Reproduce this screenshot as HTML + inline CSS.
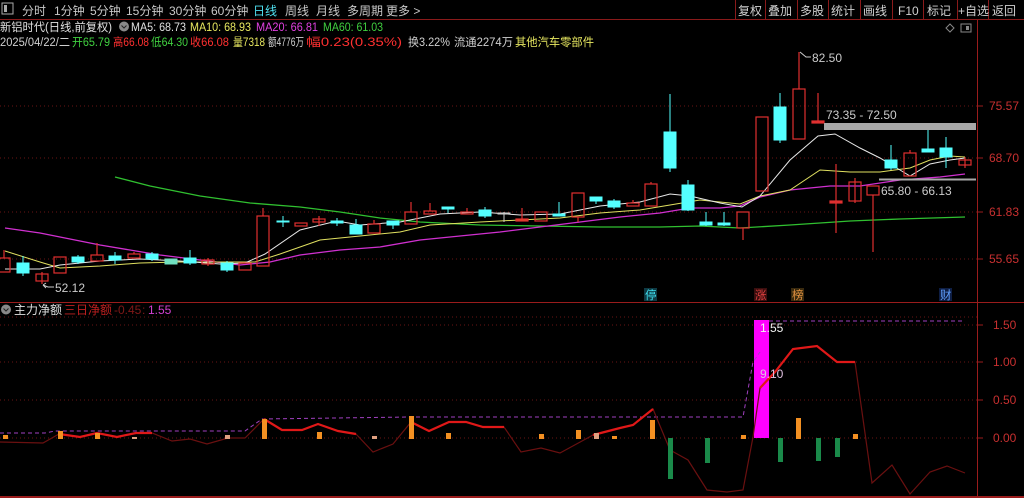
<!DOCTYPE html>
<html><head><meta charset="utf-8"><style>
html,body{margin:0;padding:0;background:#000;width:1024px;height:498px;overflow:hidden}
svg{display:block}
text{font-family:"Liberation Sans","Noto Sans CJK SC",sans-serif;font-size:12px}
.s{font-size:11.5px}
</style></head><body>
<svg width="1024" height="498" viewBox="0 0 1024 498" xmlns="http://www.w3.org/2000/svg">
<rect width="1024" height="498" fill="#000"/>
<!-- toolbar -->
<rect x="2" y="3" width="11" height="11" fill="none" stroke="#aaa"/><rect x="4" y="5" width="3" height="7" fill="#aaa"/>
<g fill="#c8c8c8">
<text x="22" y="15">分时</text><text x="54" y="15">1分钟</text><text x="90" y="15">5分钟</text><text x="126" y="15">15分钟</text><text x="169" y="15">30分钟</text><text x="211" y="15">60分钟</text>
<text x="253" y="15" fill="#4fe0f0">日线</text><text x="285" y="15">周线</text><text x="316" y="15">月线</text><text x="347" y="15">多周期</text><text x="386" y="15">更多 &gt;</text>
</g>
<g stroke="#8a1a1a" fill="none">
<line x1="0" y1="19.5" x2="1024" y2="19.5"/>
<line x1="735.5" y1="0" x2="735.5" y2="19"/><line x1="765.5" y1="0" x2="765.5" y2="19"/><line x1="797.5" y1="0" x2="797.5" y2="19"/><line x1="828.5" y1="0" x2="828.5" y2="19"/><line x1="860.5" y1="0" x2="860.5" y2="19"/><line x1="892.5" y1="0" x2="892.5" y2="19"/><line x1="923.5" y1="0" x2="923.5" y2="19"/><line x1="957.5" y1="0" x2="957.5" y2="19"/><line x1="988.5" y1="0" x2="988.5" y2="19"/>
</g>
<g fill="#d0d0d0">
<text x="738" y="15">复权</text><text x="768" y="15">叠加</text><text x="800" y="15">多股</text><text x="831" y="15">统计</text><text x="863" y="15">画线</text><text x="898" y="15">F10</text><text x="927" y="15">标记</text><text x="958" y="15">+自选</text><text x="992" y="15">返回</text>
</g>
<!-- info lines -->
<text class="s" x="0" y="31" fill="#e0e0e0" textLength="112" lengthAdjust="spacingAndGlyphs">新铝时代(日线,前复权)</text>
<text class="s" x="131" y="31" fill="#e0e0e0" textLength="55" lengthAdjust="spacingAndGlyphs">MA5: 68.73</text>
<text class="s" x="190" y="31" fill="#e8e860" textLength="61" lengthAdjust="spacingAndGlyphs">MA10: 68.93</text>
<text class="s" x="256" y="31" fill="#e040e0" textLength="62" lengthAdjust="spacingAndGlyphs">MA20: 66.81</text>
<text class="s" x="323" y="31" fill="#40d040" textLength="60" lengthAdjust="spacingAndGlyphs">MA60: 61.03</text>
<text class="s" x="0" y="46" fill="#d0d0d0" textLength="70" lengthAdjust="spacingAndGlyphs">2025/04/22/二</text>
<text class="s" x="72" y="46" fill="#40d040" textLength="38" lengthAdjust="spacingAndGlyphs">开65.79</text>
<text class="s" x="113" y="46" fill="#ff3030" textLength="36" lengthAdjust="spacingAndGlyphs">高66.08</text>
<text class="s" x="151" y="46" fill="#40d040" textLength="37" lengthAdjust="spacingAndGlyphs">低64.30</text>
<text class="s" x="190" y="46" fill="#ff3030" textLength="39" lengthAdjust="spacingAndGlyphs">收66.08</text>
<text class="s" x="233" y="46" fill="#e8e860" textLength="32" lengthAdjust="spacingAndGlyphs">量7318</text>
<text class="s" x="268" y="46" fill="#d0d0d0" textLength="36" lengthAdjust="spacingAndGlyphs">额4776万</text>
<text class="s" x="306" y="46" fill="#ff3030" textLength="96" lengthAdjust="spacingAndGlyphs">幅0.23(0.35%)</text>
<text class="s" x="408" y="46" fill="#d0d0d0" textLength="42" lengthAdjust="spacingAndGlyphs">换3.22%</text>
<text class="s" x="454" y="46" fill="#d0d0d0" textLength="59" lengthAdjust="spacingAndGlyphs">流通2274万</text>
<text class="s" x="515" y="46" fill="#e8e860" textLength="79" lengthAdjust="spacingAndGlyphs">其他汽车零部件</text>
<circle cx="124" cy="26.5" r="5" fill="#888"/><path d="M121.5 25.5 L124 28 L126.5 25.5" stroke="#222" fill="none"/>
<!-- top-right small icons -->
<path d="M950 24 L954 28 L950 32 L946 28 Z" fill="none" stroke="#888"/>
<rect x="961" y="24" width="10" height="8" fill="none" stroke="#888"/><rect x="966" y="26" width="3" height="4" fill="#888"/>
<!-- axis -->
<line x1="977.5" y1="20" x2="977.5" y2="498" stroke="#9a1c1c"/>
<line x1="0" y1="302.5" x2="1024" y2="302.5" stroke="#9a1c1c"/>
<line x1="0" y1="497" x2="1024" y2="497" stroke="#9a1c1c" stroke-width="2"/>
<g stroke="#6a1414" stroke-dasharray="1,3">
<line x1="0" y1="106" x2="977" y2="106"/><line x1="0" y1="158" x2="977" y2="158"/><line x1="0" y1="212" x2="977" y2="212"/><line x1="0" y1="259" x2="977" y2="259"/>
<line x1="0" y1="317" x2="977" y2="317"/>
<line x1="0" y1="325" x2="977" y2="325"/><line x1="0" y1="362" x2="977" y2="362"/><line x1="0" y1="400" x2="977" y2="400"/><line x1="0" y1="438" x2="977" y2="438"/>
</g>
<g stroke="#9a1c1c"><line x1="977" y1="106" x2="983" y2="106"/><line x1="977" y1="158" x2="983" y2="158"/><line x1="977" y1="212" x2="983" y2="212"/><line x1="977" y1="259" x2="983" y2="259"/>
<line x1="977" y1="325" x2="983" y2="325"/><line x1="977" y1="362" x2="983" y2="362"/><line x1="977" y1="400" x2="983" y2="400"/><line x1="977" y1="438" x2="983" y2="438"/></g>
<g fill="#c83030">
<text x="989" y="110">75.57</text><text x="989" y="162">68.70</text><text x="989" y="216">61.83</text><text x="989" y="263">55.65</text>
<text x="993" y="329">1.50</text><text x="993" y="366">1.00</text><text x="993" y="404">0.50</text><text x="993" y="442">0.00</text>
</g>
<!-- MA lines -->
<polyline fill="none" stroke="#30c030" stroke-width="1.3" points="115,177 150,186 200,196 250,203 300,207 340,212 380,218 420,222 480,225 540,226 600,227 660,227 700,226 740,228 790,225 850,221 900,219 965,217"/>
<polyline fill="none" stroke="#d030d0" stroke-width="1.3" points="5,228 40,233 100,245 160,255 200,260 240,265 270,262 300,255 340,250 380,247 420,240 460,236 500,232 540,227 580,222 620,217 660,213 690,208 720,208 740,206 760,197 790,190 830,186 860,186 900,180 940,177 965,174"/>
<polyline fill="none" stroke="#e0e060" stroke-width="1" points="5,251 40,262 60,268 100,266 140,263 180,262 220,262 255,262 280,254 320,240 360,236 400,232 430,225 480,222 520,220 560,218 600,213 640,210 670,205 700,200 740,204 760,196 790,190 820,170 850,172 880,172 910,168 930,160 950,156 965,157"/>
<polyline fill="none" stroke="#e8e8e8" stroke-width="1" points="5,269 40,269 60,265 100,261 140,259 180,261 220,264 245,263 265,254 300,230 337,221 360,225 400,222 440,214 480,212 520,215 560,214 600,206 640,202 670,194 690,196 720,203 742,207 760,196 790,160 818,136 835,134 860,148 880,158 900,170 910,176 930,164 950,160 965,158"/>
<!-- candles -->
<g stroke="#e03030" fill="none" stroke-width="1.2">
<line x1="4" y1="250" x2="4" y2="258"/><rect x="-2" y="258" width="12" height="14"/>
<line x1="42" y1="272" x2="42" y2="284"/><rect x="36" y="274" width="12" height="7"/>
<rect x="54" y="257" width="12" height="16"/>
<line x1="97" y1="243" x2="97" y2="255"/><rect x="91" y="255" width="12" height="6"/>
<line x1="134" y1="252" x2="134" y2="254"/><rect x="128" y="254" width="12" height="4"/>
<line x1="208" y1="258" x2="208" y2="266"/><rect x="202" y="260" width="12" height="4"/>
<rect x="239" y="263" width="12" height="7"/>
<line x1="263" y1="208" x2="263" y2="216"/><rect x="257" y="216" width="12" height="50"/>
<rect x="295" y="223" width="12" height="3"/>
<line x1="319" y1="216" x2="319" y2="226"/><rect x="313" y="219" width="12" height="3"/>
<line x1="374" y1="220" x2="374" y2="224"/><rect x="368" y="224" width="12" height="9"/>
<line x1="411" y1="202" x2="411" y2="212"/><rect x="405" y="212" width="12" height="12"/>
<line x1="430" y1="203" x2="430" y2="211"/><rect x="424" y="211" width="12" height="3"/>
<line x1="467" y1="208" x2="467" y2="212"/><rect x="461" y="212" width="12" height="2"/>
<line x1="522" y1="208" x2="522" y2="219"/><rect x="516" y="219" width="12" height="2" fill="#e05030"/>
<rect x="535" y="212" width="12" height="9"/>
<line x1="578" y1="217" x2="578" y2="222"/><rect x="572" y="193" width="12" height="24"/>
<line x1="633" y1="200" x2="633" y2="203"/><rect x="627" y="203" width="12" height="3"/>
<line x1="651" y1="182" x2="651" y2="184"/><rect x="645" y="184" width="12" height="22"/>
<line x1="743" y1="228" x2="743" y2="240"/><rect x="737" y="212" width="12" height="16"/>
<rect x="756" y="117" width="12" height="74"/>
<line x1="799" y1="52" x2="799" y2="89"/><rect x="793" y="89" width="12" height="50"/>
<line x1="818" y1="93" x2="818" y2="121"/><rect x="812" y="121" width="12" height="2" fill="#e03030"/>
<line x1="836" y1="164" x2="836" y2="233"/><rect x="830" y="201" width="12" height="2" fill="#e03030"/>
<line x1="855" y1="178" x2="855" y2="203"/><rect x="849" y="182" width="12" height="19"/>
<line x1="873" y1="195" x2="873" y2="252"/><rect x="867" y="186" width="12" height="9"/>
<line x1="910" y1="150" x2="910" y2="153"/><rect x="904" y="153" width="12" height="23"/>
<line x1="965" y1="157" x2="965" y2="168"/><rect x="959" y="160" width="12" height="5"/>
</g>
<g stroke="#54ffff" fill="#54ffff" stroke-width="1">
<line x1="23" y1="256" x2="23" y2="276"/><rect x="17" y="263" width="12" height="10"/>
<line x1="78" y1="255" x2="78" y2="264"/><rect x="72" y="257" width="12" height="5"/>
<line x1="115" y1="252" x2="115" y2="264"/><rect x="109" y="256" width="12" height="4"/>
<line x1="152" y1="252" x2="152" y2="261"/><rect x="146" y="254" width="12" height="5"/>
<rect x="165" y="259" width="12" height="5" fill="#70e0c0" stroke="#70e0c0"/>
<line x1="190" y1="250" x2="190" y2="265"/><rect x="184" y="258" width="12" height="5"/>
<line x1="227" y1="261" x2="227" y2="272"/><rect x="221" y="263" width="12" height="7"/>
<line x1="283" y1="216" x2="283" y2="227"/><rect x="277" y="221" width="12" height="1"/>
<line x1="337" y1="218" x2="337" y2="226"/><rect x="331" y="221" width="12" height="2"/>
<line x1="356" y1="219" x2="356" y2="234"/><rect x="350" y="225" width="12" height="9"/>
<line x1="393" y1="221" x2="393" y2="229"/><rect x="387" y="221" width="12" height="4"/>
<line x1="448" y1="207" x2="448" y2="213"/><rect x="442" y="207" width="12" height="2"/>
<line x1="485" y1="207" x2="485" y2="218"/><rect x="479" y="210" width="12" height="6"/>
<line x1="504" y1="212" x2="504" y2="222" stroke="#ccc"/><rect x="498" y="213" width="12" height="1" stroke="#ccc"/>
<line x1="559" y1="202" x2="559" y2="216"/><rect x="553" y="214" width="12" height="2"/>
<line x1="596" y1="197" x2="596" y2="204"/><rect x="590" y="197" width="12" height="4"/>
<line x1="614" y1="199" x2="614" y2="209"/><rect x="608" y="201" width="12" height="6"/>
<line x1="670" y1="94" x2="670" y2="172"/><rect x="664" y="132" width="12" height="36"/>
<line x1="688" y1="180" x2="688" y2="211"/><rect x="682" y="185" width="12" height="25"/>
<line x1="706" y1="212" x2="706" y2="226"/><rect x="700" y="222" width="12" height="3"/>
<line x1="724" y1="212" x2="724" y2="226"/><rect x="718" y="223" width="12" height="2"/>
<line x1="780" y1="93" x2="780" y2="143"/><rect x="774" y="107" width="12" height="33"/>
<line x1="891" y1="145" x2="891" y2="170"/><rect x="885" y="160" width="12" height="8"/>
<line x1="928" y1="129" x2="928" y2="152"/><rect x="922" y="149" width="12" height="3"/>
<line x1="946" y1="137" x2="946" y2="168"/><rect x="940" y="148" width="12" height="9"/>
</g>
<!-- annotations -->
<path d="M800 52 L806 57 L811 57" stroke="#ccc" fill="none"/><text x="812" y="62" fill="#ccc">82.50</text>
<path d="M43 285 L48 287 L54 287 M43 285 L46 283 M43 285 L46 288" stroke="#ccc" fill="none"/><text x="55" y="292" fill="#ccc">52.12</text>
<rect x="824" y="123" width="152" height="7" fill="#a8a8a8"/><text x="826" y="119" fill="#ccc">73.35 - 72.50</text>
<line x1="879" y1="179.5" x2="976" y2="179.5" stroke="#a8a8a8" stroke-width="2"/><text x="881" y="195" fill="#ccc">65.80 - 66.13</text>
<rect x="644" y="288" width="13" height="13" fill="#0e3a44"/><text class="s" x="645" y="299" fill="#40e0f0">停</text>
<rect x="754" y="288" width="13" height="13" fill="#3a0e0e"/><text class="s" x="755" y="299" fill="#e04040">涨</text>
<rect x="791" y="288" width="13" height="13" fill="#3a2a0e"/><text class="s" x="792" y="299" fill="#e09040">榜</text>
<rect x="939" y="288" width="13" height="13" fill="#0e1e44"/><text class="s" x="940" y="299" fill="#60a0ff">财</text>
<!-- lower header -->
<circle cx="6" cy="309.5" r="5" fill="#888"/><path d="M3.5 308.5 L6 311 L8.5 308.5" stroke="#222" fill="none"/>
<text x="14" y="314" fill="#e0e0e0">主力净额</text>
<text x="64" y="314" fill="#c02020">三日净额</text>
<text x="114" y="314" fill="#801818">-0.45</text>
<text x="142" y="314" fill="#801818">:</text>
<text x="148" y="314" fill="#d040d0">1.55</text>
<!-- lower indicator -->
<rect x="754" y="320" width="15" height="118" fill="#ff00ff"/>
<polyline fill="none" stroke="#a040c0" stroke-dasharray="4,3" points="0,433 45,433 55,431 245,431 262,419 410,417 743,417 753,362 760,352"/>
<polyline fill="none" stroke="#a040c0" stroke-dasharray="4,3" points="769,321 963,321"/>
<polyline fill="none" stroke="#6a1010" stroke-width="1.2" points="0,442 43,443 59,434 80,437 97,433 117,437 136,433 152,433 172,441 190,439 207,444 228,438 245,438 264,419 282,430 302,430 318,424 338,431 356,434 373,452 393,444 411,422 429,431 449,422 466,422 483,427 504,427 521,452 541,448 560,453 593,435 620,428 633,425 653,409 670,450 688,460 707,490 727,492 743,490 753,437 760,388 775,372 793,349 817,346 837,362 855,362 872,483 892,465 910,494 930,472 947,466 965,473"/>
<g fill="none" stroke="#e01818" stroke-width="2.2">
<polyline points="59,434 80,437 97,433 117,437 136,433 152,433"/>
<polyline points="264,419 282,430 302,430 318,424 338,431 356,434"/>
<polyline points="411,422 429,431 449,422 466,422 483,427 504,427"/>
<polyline points="593,435 620,428 633,425 653,409"/>
<polyline points="760,388 775,372 793,349 817,346 837,362 855,362"/>
</g>
<g fill="#f39022">
<rect x="3" y="435" width="5" height="4"/><rect x="58" y="431" width="5" height="8"/><rect x="95" y="433" width="5" height="6"/>
<rect x="132" y="437" width="5" height="2" fill="#e0a080"/><rect x="225" y="435" width="5" height="4" fill="#e0a080"/>
<rect x="262" y="419" width="5" height="20"/><rect x="317" y="432" width="5" height="7"/><rect x="372" y="436" width="5" height="3" fill="#e0a080"/>
<rect x="409" y="416" width="5" height="23"/><rect x="446" y="433" width="5" height="6"/><rect x="539" y="434" width="5" height="5"/>
<rect x="576" y="430" width="5" height="9"/><rect x="594" y="433" width="5" height="6" fill="#e0a080"/><rect x="612" y="436" width="5" height="3"/>
<rect x="650" y="420" width="5" height="19"/><rect x="741" y="435" width="5" height="4"/><rect x="796" y="418" width="5" height="21"/><rect x="853" y="434" width="5" height="5"/>
</g>
<g fill="#1a8a4a">
<rect x="668" y="438" width="5" height="41"/><rect x="705" y="438" width="5" height="25"/><rect x="778" y="438" width="5" height="24"/><rect x="816" y="438" width="5" height="23"/><rect x="835" y="438" width="5" height="19"/>
</g>
<text x="760" y="332" fill="#f0f0f0">1.55</text>
<text x="760" y="378" fill="#e0c0e0">9.10</text>
</svg>
</body></html>
